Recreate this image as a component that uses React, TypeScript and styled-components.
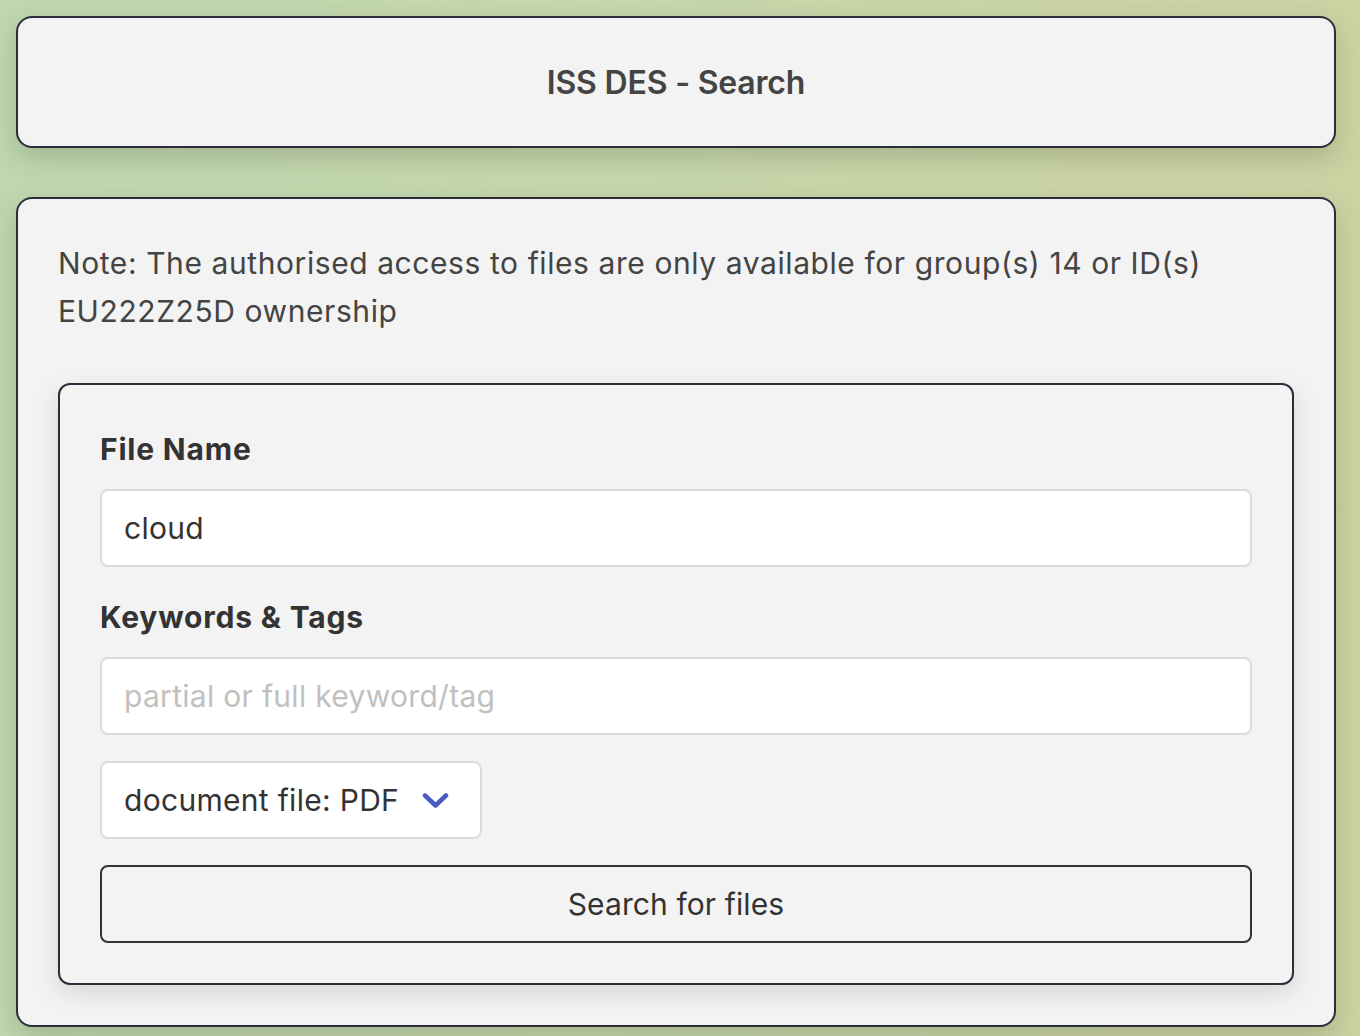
import React, { useState } from "react";
import styled, { createGlobalStyle } from "styled-components";

const GlobalStyle = createGlobalStyle`
  html, body {
    margin: 0;
    padding: 0;
  }
  body {
    min-height: 100vh;
    background: linear-gradient(90deg, #bfd7b0 0%, #c6d6aa 50%, #cdd2a3 100%);
    font-family: Inter, "Noto Sans", "Liberation Sans", sans-serif;
    color: #444;
  }
`;

const Page = styled.div`
  display: flex;
  flex-direction: column;
  gap: 49px;
  padding: 16px 24px 8px 16px;
`;

const Card = styled.div`
  background: #f3f3f3;
  border: 2px solid #2b2d3a;
  border-radius: 16px;
  box-shadow: 0 10px 24px rgba(60, 70, 40, 0.22);
`;

const Header = styled(Card)`
  padding: 42px 0 41px;
  text-align: center;
`;

const Title = styled.h1`
  margin: 0;
  font-size: 32px;
  line-height: 45px;
  font-weight: 600;
  letter-spacing: -0.2px;
  color: #444;
`;

const Main = styled(Card)`
  padding: 40px;
`;

const Note = styled.p`
  margin: 0 0 48px;
  font-size: 30px;
  line-height: 48px;
  letter-spacing: 0.58px;
  color: #444;
`;

const Form = styled.form`
  display: flex;
  flex-direction: column;
  align-items: flex-start;
  padding: 40px;
  border: 2px solid #2b2d3a;
  border-radius: 12px;
  box-shadow: 0 8px 24px rgba(0, 0, 0, 0.12);
`;

const Label = styled.label`
  display: block;
  margin: 6px 0 22px;
  font-size: 30px;
  line-height: 36px;
  font-weight: 700;
  letter-spacing: 0.8px;
  color: #333;
`;

const Input = styled.input`
  box-sizing: border-box;
  width: 100%;
  height: 78px;
  margin: 0 0 26px;
  padding: 0 22px;
  background: #fff;
  border: 2px solid #dcdcdc;
  border-radius: 8px;
  font-family: inherit;
  font-size: 30px;
  letter-spacing: 0.3px;
  color: #333;
  outline: none;

  &::placeholder {
    color: #c0c0c0;
  }
`;

const SelectBox = styled.div`
  box-sizing: border-box;
  display: flex;
  align-items: center;
  gap: 23px;
  height: 78px;
  margin: 0 0 26px;
  padding: 0 31px 0 22px;
  background: #fff;
  border: 2px solid #dcdcdc;
  border-radius: 8px;
  font-size: 30px;
  letter-spacing: 0.3px;
  color: #333;
`;

const Chevron = styled.svg`
  width: 27px;
  height: 17px;
`;

const SubmitButton = styled.button`
  box-sizing: border-box;
  width: 100%;
  height: 78px;
  background: #f3f3f3;
  border: 2px solid #333;
  border-radius: 8px;
  font-family: inherit;
  font-size: 30px;
  letter-spacing: 0.1px;
  color: #333;
  cursor: pointer;
`;

export default function App() {
  const [fileName, setFileName] = useState("cloud");
  const [keywords, setKeywords] = useState("");

  return (
    <>
      <GlobalStyle />
      <Page>
        <Header>
          <Title>ISS DES - Search</Title>
        </Header>
        <Main>
          <Note>
            Note: The authorised access to files are only available for
            group(s) 14 or ID(s) EU222Z25D ownership
          </Note>
          <Form onSubmit={(e) => e.preventDefault()}>
            <Label htmlFor="fileName">File Name</Label>
            <Input
              id="fileName"
              value={fileName}
              onChange={(e) => setFileName(e.target.value)}
            />
            <Label htmlFor="keywords">Keywords &amp; Tags</Label>
            <Input
              id="keywords"
              placeholder="partial or full keyword/tag"
              value={keywords}
              onChange={(e) => setKeywords(e.target.value)}
            />
            <SelectBox>
              document file: PDF
              <Chevron viewBox="0 0 27 17" fill="none">
                <path
                  d="M3 3.5 L13.5 13.5 L24 3.5"
                  stroke="#4a5bc4"
                  strokeWidth="4.5"
                  strokeLinecap="round"
                  strokeLinejoin="round"
                />
              </Chevron>
            </SelectBox>
            <SubmitButton type="submit">Search for files</SubmitButton>
          </Form>
        </Main>
      </Page>
    </>
  );
}
